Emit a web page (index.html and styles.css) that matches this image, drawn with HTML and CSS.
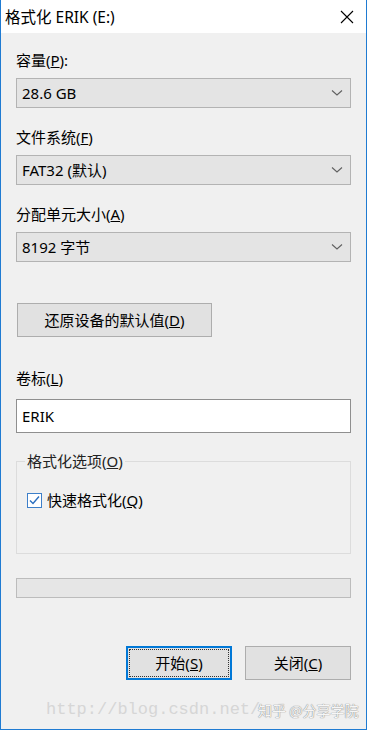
FILE: index.html
```html
<!DOCTYPE html>
<html lang="zh-CN">

<head>
    <meta charset="UTF-8">
    <meta name="viewport" content="width=device-width, initial-scale=1.0">
    <title>格式化 ERIK (E:)</title>
    <link rel="stylesheet" href="styles.css">
</head>

<body>
    <div class="window">
        <div class="titlebar">
            <span class="title">格式化 ERIK (E:)</span>
            <svg class="close" width="14" height="14" viewBox="0 0 14 14">
                <path d="M1 1 L13 13 M13 1 L1 13" stroke="#000" stroke-width="1.1" fill="none" />
            </svg>
        </div>

        <div class="content">
            <div class="label">容量(<u>P</u>):</div>
            <div class="combo">
                <span>28.6 GB</span>
                <svg class="chevron" width="12" height="8" viewBox="0 0 12 8">
                    <path d="M1 1.5 L6 6 L11 1.5" stroke="#606060" stroke-width="1.1" fill="none" />
                </svg>
            </div>

            <div class="label">文件系统(<u>F</u>)</div>
            <div class="combo">
                <span>FAT32 (默认)</span>
                <svg class="chevron" width="12" height="8" viewBox="0 0 12 8">
                    <path d="M1 1.5 L6 6 L11 1.5" stroke="#606060" stroke-width="1.1" fill="none" />
                </svg>
            </div>

            <div class="label">分配单元大小(<u>A</u>)</div>
            <div class="combo">
                <span>8192 字节</span>
                <svg class="chevron" width="12" height="8" viewBox="0 0 12 8">
                    <path d="M1 1.5 L6 6 L11 1.5" stroke="#606060" stroke-width="1.1" fill="none" />
                </svg>
            </div>

            <button class="btn restore">还原设备的默认值(<u>D</u>)</button>

            <div class="label volume">卷标(<u>L</u>)</div>
            <div class="textbox">ERIK</div>

            <fieldset class="group">
                <legend>格式化选项(<u>O</u>)</legend>
                <div class="check-row">
                    <svg class="checkbox" width="15" height="15" viewBox="0 0 15 15">
                        <rect x="0.5" y="0.5" width="14" height="14" fill="#fff" stroke="#3d7fc9" />
                        <path d="M3 7.5 L6 10.5 L12 3.5" stroke="#2a6ebf" stroke-width="1.4" fill="none" />
                    </svg>
                    <span>快速格式化(<u>Q</u>)</span>
                </div>
            </fieldset>

            <div class="progress"></div>

            <div class="actions">
                <button class="btn primary"><span class="focus">开始(<u>S</u>)</span></button>
                <button class="btn">关闭(<u>C</u>)</button>
            </div>

            <div class="watermark">
                <span class="url">http://blog.csdn.net/</span>
                <span class="zhihu">知乎 @分享学院</span>
            </div>
        </div>
    </div>
</body>

</html>
```

FILE: styles.css
```css
* {
    box-sizing: border-box;
    margin: 0;
    padding: 0;
}

body {
    font-family: "Noto Sans", "Noto Sans CJK SC", sans-serif;
    font-size: 15px;
    color: #000;
    background-color: #f0f0f0;
}

.window {
    width: 367px;
    height: 730px;
    background-color: #f0f0f0;
    border-left: 1px solid #1f7bd2;
    border-right: 1px solid #1f7bd2;
    border-bottom: 1px solid #1f7bd2;
    overflow: hidden;
}

.titlebar {
    height: 33px;
    background-color: #fff;
    display: flex;
    justify-content: space-between;
    align-items: center;
    padding: 0 12px 0 4px;
}

.title {
    font-size: 15.5px;
    line-height: 20px;
}

.content {
    padding: 17px 15px 0 15px;
    display: flex;
    flex-direction: column;
}

.label {
    line-height: 20px;
    height: 20px;
    margin-bottom: 8px;
}

.combo {
    height: 30px;
    background-color: #e4e4e4;
    border: 1px solid #b3b3b3;
    display: flex;
    align-items: center;
    justify-content: space-between;
    padding: 0 7px 0 5px;
    margin-bottom: 19px;
    line-height: 20px;
}

.chevron {
    display: block;
}

.btn {
    font-family: "Noto Sans", "Noto Sans CJK SC", sans-serif;
    font-size: 15px;
    color: #000;
    background-color: #e1e1e1;
    border: 1px solid #adadad;
    height: 34px;
    width: 106px;
    line-height: 20px;
}

.restore {
    width: 195px;
    margin: 22px 0 0 1px;
}

.volume {
    margin-top: 31px;
    margin-bottom: 11px;
}

.textbox {
    height: 34px;
    background-color: #fff;
    border: 1px solid #8f8f8f;
    padding-left: 5px;
    line-height: 32px;
}

.group {
    margin-top: 18px;
    border: 1px solid #dcdcdc;
    height: 103px;
    padding: 19px 10px 0 10px;
}

.group legend {
    margin-left: -2px;
    padding: 0 2px;
    line-height: 20px;
    color: #222;
}

.check-row {
    display: flex;
    align-items: center;
    gap: 5px;
    line-height: 20px;
}

.checkbox {
    display: block;
}

.progress {
    margin-top: 24px;
    height: 20px;
    background-color: #e6e6e6;
    border: 1px solid #bcbcbc;
}

.actions {
    margin-top: 48px;
    display: flex;
    justify-content: flex-end;
    gap: 13px;
}

.primary {
    border: 2px solid #0078d7;
    padding: 1px;
}

.primary .focus {
    display: flex;
    align-items: center;
    justify-content: center;
    height: 100%;
    border: 1px dotted #333;
}

.watermark {
    position: relative;
    margin-top: 18px;
    height: 24px;
    padding-left: 30px;
}

.url {
    font-family: "Liberation Mono", monospace;
    font-size: 17px;
    line-height: 24px;
    color: #d6d6d6;
}

.zhihu {
    position: absolute;
    left: 242px;
    top: 2px;
    white-space: nowrap;
    font-family: "Noto Sans CJK SC", sans-serif;
    font-size: 14px;
    line-height: 20px;
    color: #f6f6f6;
    text-shadow: 0 0 1px #8a8a8a, 0 0 1px #8a8a8a;
}
```
